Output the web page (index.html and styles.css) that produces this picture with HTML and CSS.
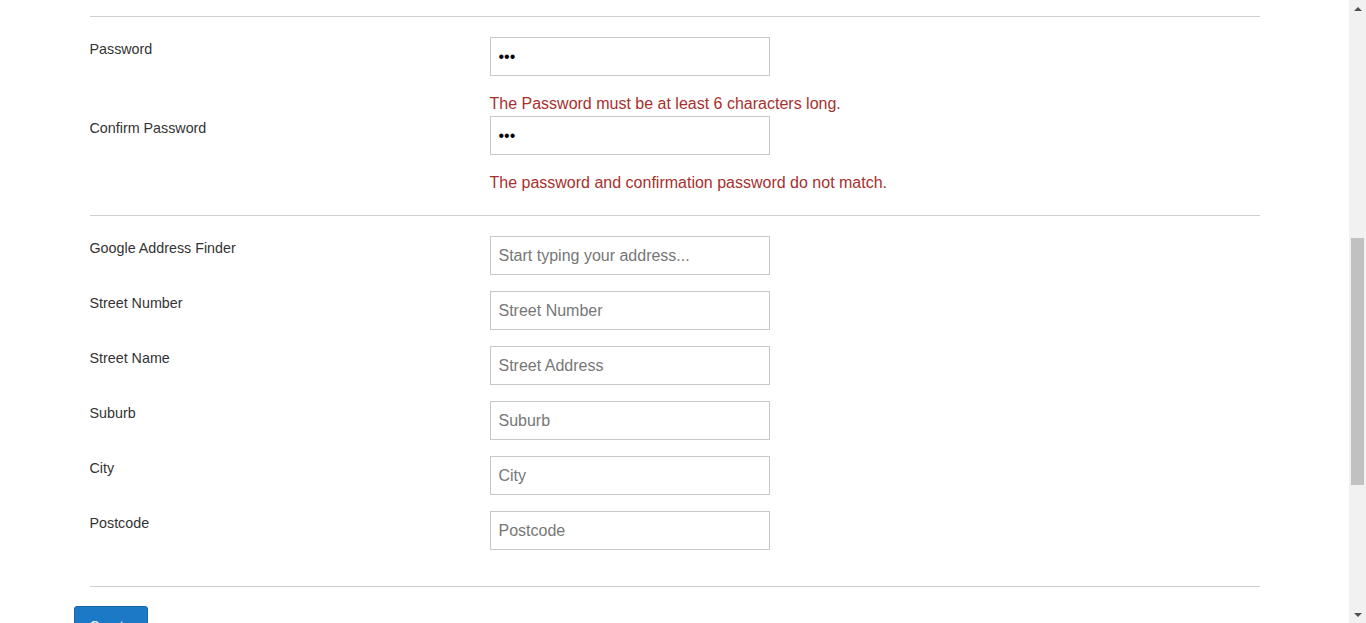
FILE: index.html
```html
<!DOCTYPE html>
<html lang="en">
<head>
<meta charset="utf-8">
<title>Register</title>
<link rel="stylesheet" href="styles.css">
</head>
<body>
<div class="page">
  <main class="viewport">
    <form class="form">
      <hr class="divider divider--top">
      <div class="row row--error">
        <label class="row__label">Password</label>
        <div class="row__field">
          <input class="input input--password" type="password" value="abc">
          <span class="error">The Password must be at least 6 characters long.</span>
        </div>
      </div>
      <div class="row row--error">
        <label class="row__label">Confirm Password</label>
        <div class="row__field">
          <input class="input input--password" type="password" value="abc">
          <span class="error">The password and confirmation password do not match.</span>
        </div>
      </div>
      <hr class="divider">
      <div class="row">
        <label class="row__label">Google Address Finder</label>
        <div class="row__field"><input class="input" type="text" placeholder="Start typing your address..."></div>
      </div>
      <div class="row">
        <label class="row__label">Street Number</label>
        <div class="row__field"><input class="input" type="text" placeholder="Street Number"></div>
      </div>
      <div class="row">
        <label class="row__label">Street Name</label>
        <div class="row__field"><input class="input" type="text" placeholder="Street Address"></div>
      </div>
      <div class="row">
        <label class="row__label">Suburb</label>
        <div class="row__field"><input class="input" type="text" placeholder="Suburb"></div>
      </div>
      <div class="row">
        <label class="row__label">City</label>
        <div class="row__field"><input class="input" type="text" placeholder="City"></div>
      </div>
      <div class="row">
        <label class="row__label">Postcode</label>
        <div class="row__field"><input class="input" type="text" placeholder="Postcode"></div>
      </div>
      <hr class="divider divider--bottom">
      <button class="btn" type="button">Create</button>
    </form>
  </main>
  <div class="scrollbar" aria-hidden="true">
    <div class="scrollbar__btn"><span class="arrow arrow--up"></span></div>
    <div class="scrollbar__track"><div class="scrollbar__thumb"></div></div>
    <div class="scrollbar__btn"><span class="arrow arrow--down"></span></div>
  </div>
</div>
</body>
</html>
```
FILE: styles.css
```css
html, body {
  margin: 0;
  padding: 0;
  height: 100%;
  background: #fff;
}
body {
  font-family: "Liberation Sans", Arial, sans-serif;
  font-size: 14px;
  line-height: 20px;
  color: #333;
  overflow: hidden;
}
.page {
  display: flex;
  height: 100vh;
}
.viewport {
  flex: 1;
  overflow: hidden;
}
.form {
  width: 1170px;
  margin: 0 auto;
  padding-top: 16px;
  display: flex;
  flex-direction: column;
}
.divider {
  border: 0;
  border-top: 1px solid #cfcfcf;
  height: 0;
  width: 100%;
  margin: 20px 0;
}
.divider--top { margin-top: 0; }
.divider--bottom { margin-bottom: 19px; }
.row {
  display: grid;
  grid-template-columns: 400px 280px;
  margin-bottom: 16px;
}
.row--error { margin-bottom: 0; }
.row__label {
  padding-top: 2px;
  font-size: 14.3px;
  line-height: 20px;
  color: #333;
}
.row__field {
  display: flex;
  flex-direction: column;
}
.input {
  box-sizing: border-box;
  width: 280px;
  height: 39px;
  margin: 0;
  padding: 0 8px;
  border: 1px solid #c8c8c8;
  border-radius: 0;
  background: #fff;
  font-family: "Liberation Sans", Arial, sans-serif;
  font-size: 16px;
  color: #333;
  outline: none;
}
.input::placeholder { color: #777; }
.input--password { color: #000; font-size: 16px; }
.error {
  display: block;
  margin-top: 16px;
  line-height: 24px;
  font-size: 16px;
  color: #a8302e;
  white-space: nowrap;
}
.btn {
  align-self: flex-start;
  margin-left: -16px;
  padding: 9px 15px 6px;
  border: 1px solid #1766a8;
  border-radius: 3px;
  background: #1b79c6;
  color: #fff;
  font-family: "Liberation Sans", Arial, sans-serif;
  font-size: 14px;
  line-height: 20px;
}
.scrollbar {
  width: 17px;
  flex: 0 0 17px;
  display: flex;
  flex-direction: column;
  background: #f1f1f1;
}
.scrollbar__btn {
  height: 17px;
  display: flex;
  align-items: center;
  justify-content: center;
}
.scrollbar__track {
  flex: 1;
  padding-top: 221px;
}
.scrollbar__thumb {
  height: 247px;
  margin: 0 2px;
  background: #c1c1c1;
}
.arrow {
  width: 0;
  height: 0;
  border-left: 4px solid transparent;
  border-right: 4px solid transparent;
}
.arrow--up { border-bottom: 4px solid #505050; }
.arrow--down { border-top: 4px solid #505050; }
```
